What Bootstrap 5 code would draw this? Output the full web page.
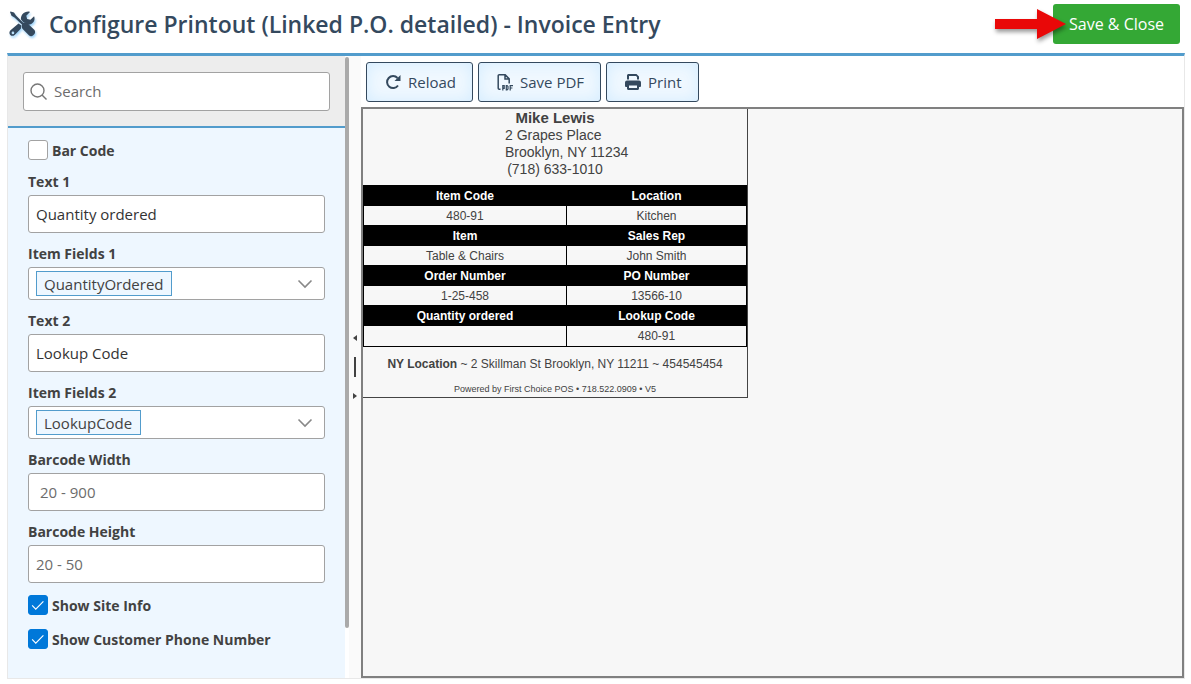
<!DOCTYPE html>
<html lang="en">
<head>
<meta charset="utf-8">
<meta name="viewport" content="width=device-width, initial-scale=1">
<title>Configure Printout</title>
<link href="https://cdn.jsdelivr.net/npm/bootstrap@5.3.0/dist/css/bootstrap.min.css" rel="stylesheet">
<style>
  :root { --ink: #34495e; --line: #529ccc; --edge: #a2a2a2; }
  body { font-family: "Open Sans", "Noto Sans", sans-serif; font-size: 15px; color: #424242; background: #fff; }
  .page-wrap { padding: 0 6px 5px 7px; }
  .page-head { height: 53px; padding: 0 5px 6px 0; }
  .page-title { font-size: 23px; line-height: 32px; font-weight: 600; color: var(--ink); }
  .head-left { gap: 12px; }
  .tool-icon { filter: drop-shadow(1px 2px 1px #9fd4fa); }
  .btn-save { background: #34a835; color: #fff; font-size: 16px; line-height: 24px; height: 40px; border: 0; border-radius: 3px; padding: 0 16px; }
  .btn-save:hover { background: #2b8f2c; color: #fff; }
  .arrow-mark { right: 118px; top: 6px; filter: drop-shadow(1px 3px 2px rgba(0,0,0,.4)); pointer-events: none; }
  .workspace { border: 1px solid #e8e8e8; border-top: 3px solid var(--line); min-height: 0; }
  .side-pane { width: 29%; min-width: 300px; }
  .side-track { width: 4px; padding-top: 1px; }
  .side-thumb { background: #aaa; height: 92%; border-radius: 2px; }
  .search-area { background: #ededed; padding: 16px 15px 15px; border-bottom: 2px solid var(--line); }
  .search-box { height: 39px; border: 1px solid var(--edge); border-radius: 3px; background: #fff; padding: 0 6px; gap: 7px; }
  .search-box input { border: 0; outline: 0; background: none; min-width: 0; }
  .search-box input::placeholder, .text-field::placeholder { color: #6c6c6c; opacity: 1; }
  .options { background: #eef7ff; padding: 12px 20px; }
  .field-label { display: block; font-weight: 700; font-size: 14px; line-height: 22px; margin: 10px 0 2px; }
  .text-field { display: block; width: 100%; height: 38px; border: 1px solid var(--edge); border-radius: 3px; background: #fff; color: #333; padding: 0 7px; }
  .text-field.indented { padding-left: 11px; }
  .pick-field { height: 33px; border: 1px solid var(--edge); border-radius: 3px; background: #fff; padding: 0 11px 0 7px; }
  .pick-field select { appearance: none; border: 1px solid var(--line); background: #eef7ff; color: #424242; height: 25px; line-height: 20px; padding: 0 7px; }
  .tick-row { height: 20px; margin-top: 14px; font-weight: 700; font-size: 14px; }
  .tick-row:first-child { margin: 0 0 11px; }
  .text-field + .tick-row { margin-top: 12px; }
  .tick-row .form-check-input { width: 20px; height: 20px; margin: 0; border: 1px solid var(--edge); border-radius: 3px; }
  .tick-row .form-check-input:checked { background-color: #0078d9; border-color: #0078d9;
    background-image: url("data:image/svg+xml,%3csvg xmlns='http://www.w3.org/2000/svg' viewBox='0 0 20 20'%3e%3cpath fill='none' stroke='%23fff' stroke-width='1.3' d='M3.5 10.5l4 4L16 6'/%3e%3c/svg%3e"); }
  .splitter { width: 12px; background: #fafafa; gap: 15px; }
  .splitter i { width: 2px; height: 20px; background: #424242; }
  .toolbar { padding: 6px 5px 5px; gap: 5px; }
  .btn-tool { height: 40px; font-size: 15px; color: var(--ink); border: 1px solid var(--ink); border-radius: 3px; background: #f0f8ff; box-shadow: inset 0 0 16px #d3ecff; padding: 0 16px 0 18px; gap: 7px; }
  .preview { border: 2px solid #808080; background: #f7f7f7; min-height: 0; overflow: auto; }
  .receipt { width: 385px; border: solid #444; border-width: 0 1px 1px 0; font-family: "Liberation Sans", Arial, sans-serif; font-size: 12px; color: #424242; }
  .customer { width: 100px; height: 76px; font-size: 14px; line-height: 17px; white-space: nowrap; }
  .customer b { font-size: 15px; line-height: 18px; }
  .order-table { width: 384px; border-collapse: collapse; table-layout: fixed; text-align: center; line-height: 18px; }
  .order-table th, .order-table td { border: 1px solid #000; height: 20px; padding: 0; }
  .order-table th { background: #000; color: #fff; }
  .order-table th:first-child { width: 53%; }
  .order-table tr:last-child td { height: 21px; }
  .site-line { line-height: 18px; padding-top: 8px; }
  .powered { font-size: 9px; line-height: 14px; padding: 9px 0 1px; }
</style>
</head>
<body>
<div class="page-wrap d-flex flex-column vh-100">
  <header class="page-head d-flex align-items-center justify-content-between position-relative flex-shrink-0">
    <div class="head-left d-flex align-items-center">
      <svg class="tool-icon" width="30" height="30" viewBox="0 0 30 30" aria-hidden="true">
        <g fill="#34495e">
          <path d="M3.500 2.500 7 3.500l2 3 7.500 7.500c1.500-.8 3-.6 4.200.5l6.500 6.300c1.300 1.400 1.200 3.200 0 4.500l-1 1c-1.300 1.200-3 1.200-4.300 0l-6.200-6.400c-1.200-1.200-1.300-2.700-.6-4.100L7.500 8.500l-3-1.700L3 3z"/>
          <path d="M14 10.500c-.5-3.800 2.500-8.200 8-8l1 .6-3.700 3.700.8 3.200 3.300.8 3.700-3.600c1.800 4-1.500 8.800-6.300 8.500-1.300-1.500-2.900-2.300-4.300-2.200z"/>
          <path fill-rule="evenodd" d="M11.500 14.500 3.500 21.300c-3 2.800.8 7.500 4.200 4.700L14 19.500c-.2-1.200.1-2.200.4-2.900zM6 22.600a1.300 1.300 0 1 1-.1 2.600 1.300 1.300 0 0 1 .1-2.600z"/>
        </g>
      </svg>
      <h1 class="page-title mb-0">Configure Printout (Linked P.O. detailed) - Invoice Entry</h1>
    </div>
    <button class="btn btn-save" type="button">Save &amp; Close</button>
    <svg class="arrow-mark position-absolute" width="72" height="34" viewBox="0 0 72 34" aria-hidden="true"><path fill="#e90808" d="M0 13h42V3l29 15-29 15V23H0z"/></svg>
  </header>
  <main class="workspace d-flex flex-grow-1">
    <aside class="side-pane d-flex flex-shrink-0">
      <div class="d-flex flex-column flex-grow-1">
        <div class="search-area">
          <label class="search-box d-flex align-items-center">
            <svg width="17" height="18" viewBox="0 0 17 18" fill="none" stroke="#777" stroke-width="1.4" aria-hidden="true"><circle cx="7.500" cy="7.500" r="6.500"/><path d="M12 12l4.500 4.500"/></svg>
            <input class="flex-grow-1 p-0" type="search" placeholder="Search" aria-label="Search">
          </label>
        </div>
        <form class="options flex-grow-1">
          <div class="tick-row d-flex align-items-center"><input class="form-check-input" type="checkbox" id="barCode"><label class="ms-1" for="barCode">Bar Code</label></div>
          <label class="field-label" for="text1">Text 1</label>
          <input class="text-field" id="text1" value="Quantity ordered">
          <label class="field-label" for="fields1">Item Fields 1</label>
          <div class="pick-field d-flex align-items-center justify-content-between"><select id="fields1"><option>QuantityOrdered</option></select><svg width="16" height="10" viewBox="0 0 16 10" fill="none" stroke="#888" stroke-width="1.600" aria-hidden="true"><path d="M1.500 1.500L8 8l6.500-6.500"/></svg></div>
          <label class="field-label" for="text2">Text 2</label>
          <input class="text-field" id="text2" value="Lookup Code">
          <label class="field-label" for="fields2">Item Fields 2</label>
          <div class="pick-field d-flex align-items-center justify-content-between"><select id="fields2"><option>LookupCode</option></select><svg width="16" height="10" viewBox="0 0 16 10" fill="none" stroke="#888" stroke-width="1.600" aria-hidden="true"><path d="M1.500 1.500L8 8l6.500-6.500"/></svg></div>
          <label class="field-label" for="bw">Barcode Width</label>
          <input class="text-field indented" id="bw" placeholder="20 - 900">
          <label class="field-label" for="bh">Barcode Height</label>
          <input class="text-field" id="bh" placeholder="20 - 50">
          <div class="tick-row d-flex align-items-center"><input class="form-check-input" type="checkbox" id="site" checked><label class="ms-1" for="site">Show Site Info</label></div>
          <div class="tick-row d-flex align-items-center"><input class="form-check-input" type="checkbox" id="phone" checked><label class="ms-1" for="phone">Show Customer Phone Number</label></div>
        </form>
      </div>
      <div class="side-track"><div class="side-thumb"></div></div>
    </aside>
    <div class="splitter d-flex flex-column align-items-center justify-content-center flex-shrink-0" role="separator">
      <svg width="6" height="8" aria-hidden="true"><path fill="#424242" d="M5 1v6L1 4z"/></svg><i></i><svg width="6" height="8" aria-hidden="true"><path fill="#424242" d="M1 1v6l4-3z"/></svg>
    </div>
    <section class="d-flex flex-column flex-grow-1">
      <div class="toolbar d-flex">
        <button class="btn btn-tool d-flex align-items-center" type="button">
          <svg width="16" height="16" viewBox="0 0 16 16" aria-hidden="true"><path d="M13 11.500A6 6 0 1 1 12.500 4" fill="none" stroke="#34495e" stroke-width="2"/><path fill="#34495e" d="M15.500 1v6h-6z"/></svg>Reload</button>
        <button class="btn btn-tool d-flex align-items-center" type="button">
          <svg width="16" height="18" viewBox="0 0 16 18" aria-hidden="true" fill="none" stroke="#34495e" stroke-width="1.500">
            <path d="M3.500 16.200H2.200a1 1 0 0 1-1-1V2.700a1 1 0 0 1 1-1h6l4 4.200v4.600M8 2v4h4"/>
            <path stroke-width="1.200" d="M5.800 17.500v-5h1.400v2.800H5.800M9.300 12.600v4.300h.8l.9-.8v-2.700l-.9-.8zM13.200 17.500v-4.900H16M13.200 15h2.200"/>
          </svg>Save PDF</button>
        <button class="btn btn-tool d-flex align-items-center" type="button">
          <svg width="16" height="16" viewBox="0 0 16 16" aria-hidden="true">
            <path fill="#34495e" fill-rule="evenodd" d="M2 5.500V1.600C2 .7 2.700 0 3.600 0h7.900L14 2.400v3.100h-2V3l-1-1H4v3.500zM2 6.500h12a2 2 0 0 1 2 2V12a1 1 0 0 1-1 1h-1v1.500c0 .9-.6 1.500-1.500 1.500h-9C2.600 16 2 15.400 2 14.500V13H1a1 1 0 0 1-1-1V8.500a2 2 0 0 1 2-2zM4 11.500V14h8v-2.500z"/>
          </svg>Print</button>
      </div>
      <div class="preview flex-grow-1">
        <div class="receipt">
          <div class="customer mx-auto"><b class="d-block text-center">Mike Lewis</b>2 Grapes Place<br>Brooklyn, NY 11234<div class="text-center">(718) 633-1010</div></div>
          <table class="order-table">
            <tr><th>Item Code</th><th>Location</th></tr>
            <tr><td>480-91</td><td>Kitchen</td></tr>
            <tr><th>Item</th><th>Sales Rep</th></tr>
            <tr><td>Table &amp; Chairs</td><td>John Smith</td></tr>
            <tr><th>Order Number</th><th>PO Number</th></tr>
            <tr><td>1-25-458</td><td>13566-10</td></tr>
            <tr><th>Quantity ordered</th><th>Lookup Code</th></tr>
            <tr><td></td><td>480-91</td></tr>
          </table>
          <div class="site-line text-center"><b>NY Location</b> ~ 2 Skillman St Brooklyn, NY 11211 ~ 454545454</div>
          <div class="powered text-center">Powered by First Choice POS • 718.522.0909 • V5</div>
        </div>
      </div>
    </section>
  </main>
</div>
<script src="https://cdn.jsdelivr.net/npm/bootstrap@5.3.0/dist/js/bootstrap.bundle.min.js"></script>
</body>
</html>
